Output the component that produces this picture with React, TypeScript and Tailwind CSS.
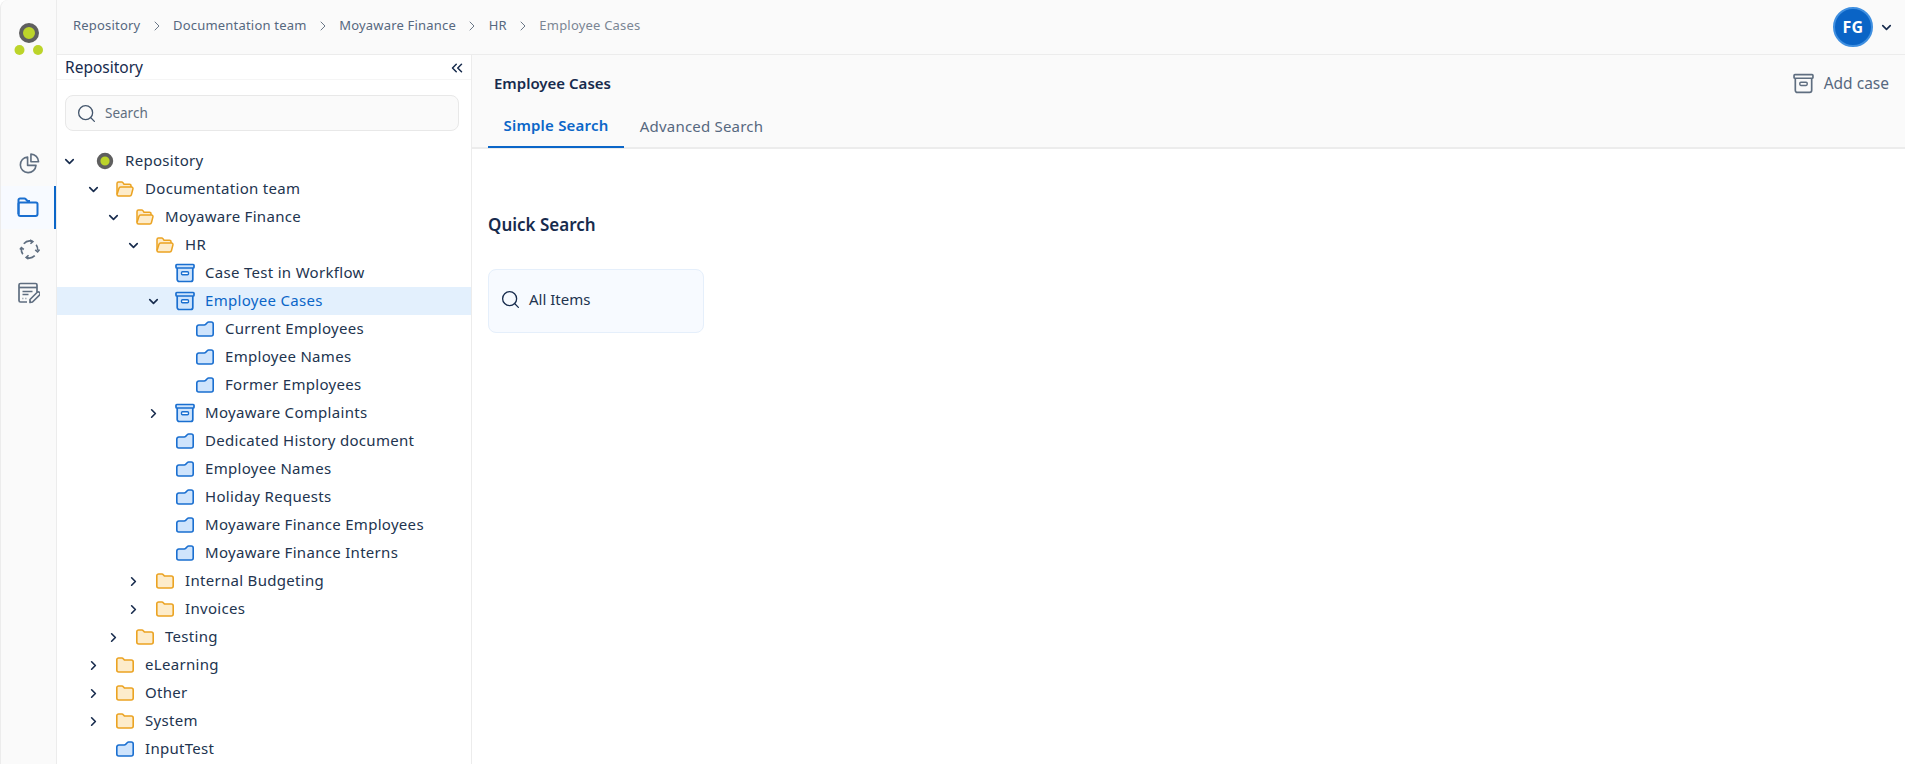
import React from "react";
import { ChevronDown, ChevronRight, ChevronsLeft, Search } from "lucide-react";

type Kind = "root" | "open" | "closed" | "case" | "blue";

type Node = {
  label: string;
  depth: number;
  kind: Kind;
  arrow?: "down" | "right";
  active?: boolean;
};

const tree: Node[] = [
  { label: "Repository", depth: 0, kind: "root", arrow: "down" },
  { label: "Documentation team", depth: 1, kind: "open", arrow: "down" },
  { label: "Moyaware Finance", depth: 2, kind: "open", arrow: "down" },
  { label: "HR", depth: 3, kind: "open", arrow: "down" },
  { label: "Case Test in Workflow", depth: 4, kind: "case" },
  { label: "Employee Cases", depth: 4, kind: "case", arrow: "down", active: true },
  { label: "Current Employees", depth: 5, kind: "blue" },
  { label: "Employee Names", depth: 5, kind: "blue" },
  { label: "Former Employees", depth: 5, kind: "blue" },
  { label: "Moyaware Complaints", depth: 4, kind: "case", arrow: "right" },
  { label: "Dedicated History document", depth: 4, kind: "blue" },
  { label: "Employee Names", depth: 4, kind: "blue" },
  { label: "Holiday Requests", depth: 4, kind: "blue" },
  { label: "Moyaware Finance Employees", depth: 4, kind: "blue" },
  { label: "Moyaware Finance Interns", depth: 4, kind: "blue" },
  { label: "Internal Budgeting", depth: 3, kind: "closed", arrow: "right" },
  { label: "Invoices", depth: 3, kind: "closed", arrow: "right" },
  { label: "Testing", depth: 2, kind: "closed", arrow: "right" },
  { label: "eLearning", depth: 1, kind: "closed", arrow: "right" },
  { label: "Other", depth: 1, kind: "closed", arrow: "right" },
  { label: "System", depth: 1, kind: "closed", arrow: "right" },
  { label: "InputTest", depth: 1, kind: "blue" },
];

const crumbs = ["Repository", "Documentation team", "Moyaware Finance", "HR"];

function TreeIcon({ kind }: { kind: Kind }) {
  if (kind === "root") {
    return (
      <svg viewBox="0 0 18 18" className="h-[18px] w-[18px]">
        <circle cx="9" cy="9" r="6.4" fill="#bcd42a" stroke="#5f5f5f" strokeWidth="3.6" />
      </svg>
    );
  }
  if (kind === "case") {
    return (
      <svg viewBox="0 0 20 20" className="h-5 w-5 text-[#1a6fd0]" fill="none">
        <path d="M2.200 5h15.600v11.500a2 2 0 0 1-2 2H4.200a2 2 0 0 1-2-2z" fill="#cfe4fc" />
        <rect x="1" y="1.500" width="18" height="3.500" rx="0.800" fill="#cfe4fc" stroke="currentColor" strokeWidth="1.700" />
        <path d="M2.200 5v11.500a2 2 0 0 0 2 2h11.600a2 2 0 0 0 2-2V5" stroke="currentColor" strokeWidth="1.700" />
        <rect x="6.500" y="8.800" width="7" height="3" rx="1" fill="#fff" stroke="currentColor" strokeWidth="1.400" />
      </svg>
    );
  }
  if (kind === "blue") {
    return (
      <svg viewBox="0 0 18 16" className="h-4 w-[18px]" fill="none">
        <path
          d="M.8 13V6a2 2 0 0 1 2-2h5.400c.6 0 1-.2 1.400-.6l1.600-1.700c.4-.4.8-.7 1.400-.7h2.600a2 2 0 0 1 2 2V13a2 2 0 0 1-2 2H2.800a2 2 0 0 1-2-2z"
          fill="#cfe4fc"
          stroke="#1a6fd0"
          strokeWidth="1.600"
        />
      </svg>
    );
  }
  if (kind === "open") {
    return (
      <svg viewBox="0 0 18 16" className="h-4 w-[18px]" fill="none">
        <path
          d="M1 13.500V2.500a1.500 1.500 0 0 1 1.500-1.500h3.200a1.500 1.500 0 0 1 1.200.6L8 3.200h5.500A1.500 1.500 0 0 1 15 4.700V6"
          fill="#fdeccb"
          stroke="#eba322"
          strokeWidth="1.500"
        />
        <path
          d="M1 13.500 3 7.200A1.700 1.700 0 0 1 4.600 6h10.900a1.500 1.500 0 0 1 1.400 2l-1.500 5.700a1.700 1.700 0 0 1-1.600 1.300H2.500A1.500 1.500 0 0 1 1 13.500z"
          fill="#fdeccb"
          stroke="#eba322"
          strokeWidth="1.500"
        />
      </svg>
    );
  }
  return (
    <svg viewBox="0 0 18 16" className="h-4 w-[18px]" fill="none">
      <path
        d="M.8 13V2.800a1.800 1.800 0 0 1 1.800-1.800h3.300a1.800 1.800 0 0 1 1.400.7L8.400 3h6.900a1.900 1.900 0 0 1 1.900 1.900V13a2 2 0 0 1-2 2H2.800a2 2 0 0 1-2-2z"
        fill="#fdeccb"
        stroke="#eba322"
        strokeWidth="1.600"
      />
    </svg>
  );
}

function TreeRow({ node }: { node: Node }) {
  return (
    <div className={`flex h-7 items-center ${node.active ? "bg-[#e3f0fd]" : ""}`}>
      <div className="shrink-0" style={{ width: node.depth * 20 }} />
      <div className={`flex w-[38px] shrink-0 items-center ${node.depth === 0 ? "pl-[5px]" : "pl-[9px]"}`}>
        {node.arrow === "down" && <ChevronDown className="h-[15px] w-[15px] text-[#172b4d]" strokeWidth={2.600} />}
        {node.arrow === "right" && <ChevronRight className="h-[15px] w-[15px] text-[#172b4d]" strokeWidth={2.600} />}
      </div>
      <div className="flex w-5 shrink-0 justify-center">
        <TreeIcon kind={node.kind} />
      </div>
      <span className={`ml-[10px] pb-[2px] tracking-[0.3px] ${node.active ? "text-[#0b66c8]" : "text-[#22344f]"}`}>{node.label}</span>
    </div>
  );
}

export default function App() {
  return (
    <div className="flex h-screen overflow-hidden bg-white font-['Noto_Sans',sans-serif] text-[15px]">
      <aside className="flex w-[57px] shrink-0 flex-col items-center rounded-tl-lg border-x border-[#ececec] bg-[#fafafa]">
        <svg viewBox="0 0 30 34" className="mt-[22px] h-[34px] w-[30px]">
          <circle cx="15" cy="11" r="8" fill="#bcd42a" stroke="#5f5f5f" strokeWidth="4" />
          <circle cx="5.500" cy="28" r="5" fill="#bcd42a" />
          <circle cx="24" cy="28" r="5" fill="#bcd42a" />
        </svg>
        <div className="mt-[87px] flex h-[43px] w-full items-center justify-center pb-[2px] pl-px">
          <svg viewBox="0 0 22 22" className="h-[21px] w-[21px] text-[#5f6e80]" fill="none" stroke="currentColor" strokeWidth="1.700">
            <path d="M9 4.200a8.200 8.200 0 1 0 8.800 8.800H9z" strokeLinejoin="round" />
            <path d="M12.500 1.200a8.200 8.200 0 0 1 8 8h-8z" strokeLinejoin="round" />
          </svg>
        </div>
        <div className="flex h-[43px] w-full items-center justify-center border-r-2 border-[#0b66c8] bg-[#f7faff] pb-[2px] pl-px">
          <svg viewBox="0 0 22 20" className="h-5 w-[22px] text-[#1a6fd0]" fill="none" stroke="currentColor" strokeWidth="2" strokeLinejoin="round">
            <path d="M1.500 17V3a1.500 1.500 0 0 1 1.500-1.500h4.500a1.500 1.500 0 0 1 1.100.5L10.500 4H13" />
            <path d="M1.500 7a1.500 1.500 0 0 1 1.500-1.500h16A1.500 1.500 0 0 1 20.500 7v10a2 2 0 0 1-2 2h-15a2 2 0 0 1-2-2z" />
          </svg>
        </div>
        <div className="flex h-[43px] w-full items-center justify-center pb-[2px] pl-px">
          <svg viewBox="0 0 22 22" className="h-[21px] w-[21px] text-[#5f6e80]" fill="none" stroke="currentColor" strokeWidth="1.700">
            <path d="M5 5A8.500 8.500 0 0 1 14 2.500" />
            <path d="M18 6A8.500 8.500 0 0 1 19.500 12" />
            <path d="M16.500 17.500A8.500 8.500 0 0 1 8 19.500" />
            <path d="M4 16A8.500 8.500 0 0 1 2.500 10" />
            <path d="M11.500 1 14.500 2.700 12 5" />
            <path d="M17 11.500 19.500 13.500 21.500 11" />
            <path d="M10 21 7.500 19.300 10 17" />
            <path d="M1 11 2.500 9 5 11" />
          </svg>
        </div>
        <div className="flex h-[43px] w-full items-center justify-center pb-[2px] pl-px">
          <svg viewBox="0 0 22 22" className="h-[22px] w-[22px] text-[#5f6e80]" fill="none" stroke="currentColor" strokeWidth="1.700">
            <path d="M9 20H2.500A1.500 1.500 0 0 1 1 18.500V3A1.500 1.500 0 0 1 2.500 1.500h15A1.500 1.500 0 0 1 19 3v7" />
            <path d="M1 5.500h18" />
            <path d="M4.500 9.500h10M4.500 12.500h6" />
            <path d="M4.500 16.500h.8M7.500 16.500h.8" />
            <path d="M12 20.500v-3l7-7a1.500 1.500 0 0 1 2.500 2.500l-7 7z" strokeLinejoin="round" />
          </svg>
        </div>
      </aside>

      <div className="flex min-w-0 flex-1 flex-col">
        <header className="flex h-[55px] shrink-0 items-center justify-between border-b border-[#ececec] bg-[#fafafa] pr-[11px] pl-[16px] text-[13px] tracking-[0.2px]">
          <nav className="mb-[2px] flex items-center text-[#56687f]">
            {crumbs.map((c) => (
              <React.Fragment key={c}>
                <span>{c}</span>
                <ChevronRight className="mx-[8.300px] h-4 w-4 text-[#6b7888]" strokeWidth={1.500} />
              </React.Fragment>
            ))}
            <span className="text-[#7a8694]">Employee Cases</span>
          </nav>
          <div className="flex items-center gap-[6px]">
            <div className="flex h-10 w-10 items-center justify-center rounded-full border-2 border-[#3f8fe0] bg-[#0a64c6] text-[16px] font-bold text-white">
              FG
            </div>
            <ChevronDown className="h-[15px] w-[15px] text-[#172b4d]" strokeWidth={2.600} />
          </div>
        </header>

        <div className="flex min-h-0 flex-1">
          <section className="flex w-[415px] shrink-0 flex-col border-r border-[#ececec]">
            <div className="flex h-[25px] shrink-0 items-center justify-between border-b border-[#f5f5f5] pt-[2px] pr-[5px] pl-2 text-[15.500px] text-[#172b4d]">
              <span>Repository</span>
              <ChevronsLeft className="h-[18px] w-[18px] text-[#172b4d]" strokeWidth={2} />
            </div>
            <div className="mx-2 mt-[15px] flex h-[36px] w-[394px] shrink-0 items-center gap-2 rounded-lg border border-[#e8e8e8] bg-[#fafafa] pl-[10px] text-[13.500px] text-[#5f6e80]">
              <Search className="h-[21px] w-[21px] text-[#44566c]" strokeWidth={1.500} />
              <span>Search</span>
            </div>
            <div className="mt-4">
              {tree.map((n, i) => (
                <TreeRow key={i} node={n} />
              ))}
            </div>
          </section>

          <main className="min-w-0 flex-1">
            <div className="h-[94px] border-b-2 border-[#ececec] bg-[#fafafa]">
              <div className="flex items-center justify-between pt-[17px] pr-[16px] pl-[22px]">
                <h1 className="text-[15px] font-semibold text-[#172b4d]">Employee Cases</h1>
                <div className="flex items-center gap-[10px] text-[15.500px] text-[#56687f]">
                  <svg viewBox="0 0 20 20" className="h-[21px] w-[21px] text-[#5f6e80]" fill="none">
                    <rect x="1" y="1.500" width="18" height="3.500" rx="0.800" stroke="currentColor" strokeWidth="1.600" />
                    <path d="M2.200 5v11.500a2 2 0 0 0 2 2h11.600a2 2 0 0 0 2-2V5" stroke="currentColor" strokeWidth="1.600" />
                    <rect x="6.500" y="8.800" width="7" height="3" rx="1" stroke="currentColor" strokeWidth="1.400" />
                  </svg>
                  <span>Add case</span>
                </div>
              </div>
              <div className="mt-[12px] ml-4 flex tracking-[0.2px]">
                <div className="flex h-[41px] w-[136px] items-center justify-center border-b-2 border-[#0b66c8] pb-1 font-semibold text-[#0b66c8]">
                  Simple Search
                </div>
                <div className="flex h-[41px] w-[155px] items-center justify-center pb-1 text-[#56687f]">Advanced Search</div>
              </div>
            </div>
            <div className="pt-[63px] pl-4">
              <h2 className="text-[17px] font-semibold text-[#172b4d]">Quick Search</h2>
              <div className="mt-[31px] flex h-16 w-[216px] items-center gap-2 rounded-lg border border-[#e5effb] bg-[#f7faff] pb-[2px] pl-[11px] text-[#22344f]">
                <Search className="h-[21px] w-[21px] text-[#172b4d]" strokeWidth={1.500} />
                <span>All Items</span>
              </div>
            </div>
          </main>
        </div>
      </div>
    </div>
  );
}
